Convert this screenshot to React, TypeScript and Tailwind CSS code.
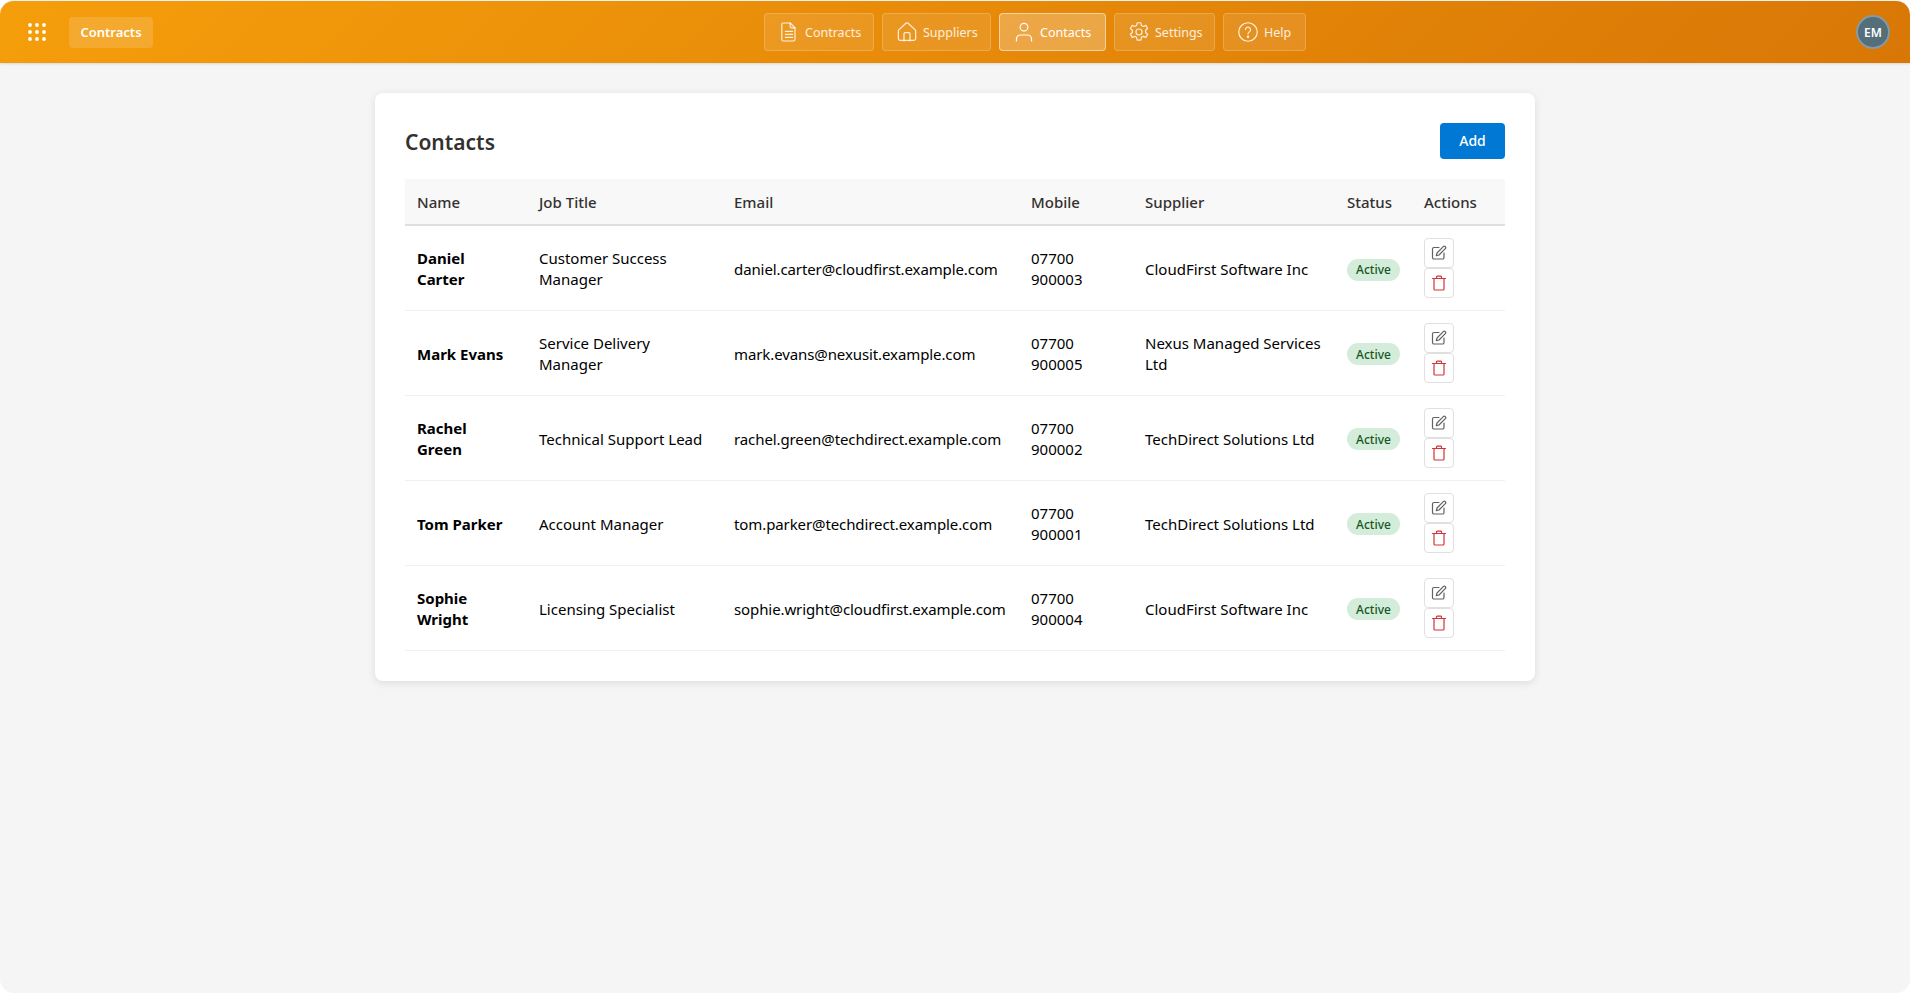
import React from "react";

const rows = [
  ["Daniel Carter", "Customer Success Manager", "daniel.carter@cloudfirst.example.com", "07700 900003", "CloudFirst Software Inc"],
  ["Mark Evans", "Service Delivery Manager", "mark.evans@nexusit.example.com", "07700 900005", "Nexus Managed Services Ltd"],
  ["Rachel Green", "Technical Support Lead", "rachel.green@techdirect.example.com", "07700 900002", "TechDirect Solutions Ltd"],
  ["Tom Parker", "Account Manager", "tom.parker@techdirect.example.com", "07700 900001", "TechDirect Solutions Ltd"],
  ["Sophie Wright", "Licensing Specialist", "sophie.wright@cloudfirst.example.com", "07700 900004", "CloudFirst Software Inc"],
];

const Ico = ({ children }: { children: React.ReactNode }) => (
  <svg width={24} height={24} viewBox="0 0 20 20" fill="none" stroke="currentColor" strokeWidth="1" strokeLinecap="round" strokeLinejoin="round">
    {children}
  </svg>
);

const nav: [string, React.ReactNode, boolean, string][] = [
  ["Contracts", <Ico><path d="M5.500 2.500h5.500l4 4v9.500a1.500 1.500 0 0 1-1.500 1.500h-8a1.500 1.500 0 0 1-1.500-1.500v-12a1.500 1.500 0 0 1 1.500-1.500z" /><path d="M11 2.500v3a1 1 0 0 0 1 1h3" /><path d="M7 9.500h6M7 12h6M7 14.500h6" /></Ico>, false, "w-[110px]"],
  ["Suppliers", <Ico><path d="M8.600 3.100a2 2 0 0 1 2.800 0l5.400 5.100a1 1 0 0 1 .4.800v6.500a1.500 1.500 0 0 1-1.500 1.500h-11.400a1.500 1.500 0 0 1-1.500-1.500v-6.500a1 1 0 0 1 .4-.8z" /><path d="M7.500 17.500v-6a1 1 0 0 1 1-1h3a1 1 0 0 1 1 1v6" /></Ico>, false, "w-[109px]"],
  ["Contacts", <Ico><circle cx="10" cy="6" r="3.200" /><path d="M3.700 17.500v-1.500a3.500 3.500 0 0 1 3.500-3.500h5.600a3.500 3.500 0 0 1 3.500 3.500v1.500" /></Ico>, true, "w-[107px]"],
  ["Settings", <Ico><circle cx="10" cy="10" r="2.500" /><path d="M8.500 2.300h3l.5 2.300 1.500.8 2.200-.9 1.500 2.600-1.700 1.500v1.800l1.700 1.500-1.500 2.600-2.200-.9-1.500.8-.5 2.300h-3l-.5-2.300-1.500-.8-2.200.9-1.500-2.600 1.700-1.500v-1.800l-1.700-1.500 1.500-2.600 2.200.9 1.500-.8z" /></Ico>, false, "w-[101px]"],
  ["Help", <Ico><circle cx="10" cy="10" r="7.700" /><path d="M7.900 8a2.100 2.100 0 1 1 3.300 1.800c-.8.5-1.200 1-1.200 1.800" /><circle cx="10" cy="14" r=".5" fill="currentColor" /></Ico>, false, "w-[83px]"],
];

export default function App() {
  return (
    <div className="bg-white font-['Noto_Sans','Open_Sans',sans-serif] text-[#000]">
      <div className="h-[993px] overflow-hidden rounded-[14px] bg-[#f5f5f5]">
        <div className="h-px bg-[#f5f5f5]" />
        <header className="flex h-[62px] items-center justify-between rounded-t-[14px] bg-[linear-gradient(135deg,#f59e0b,#d97706)] px-5 shadow-sm">
          <div className="flex w-[194px] items-center gap-[15px]">
            <button className="flex h-[34px] w-[34px] items-center justify-center">
              <svg width="18" height="18" viewBox="0 0 18 18" fill="#fff">
                {[2, 9, 16].flatMap((y) => [2, 9, 16].map((x) => <circle key={`${x}${y}`} cx={x} cy={y} r="1.900" />))}
              </svg>
            </button>
            <div className="flex h-[31px] w-[84px] items-center justify-center rounded-[4px] bg-white/15 pt-px text-[13px] font-semibold text-white">Contracts</div>
          </div>
          <nav className="flex gap-2">
            {nav.map(([label, icon, active, width]) => (
              <button
                key={label}
                className={`flex h-[38px] items-center gap-1 rounded-[4px] border pl-3 text-[12.5px] ${width} ${active ? "border-white/50 bg-white/25 text-white" : "border-white/20 bg-white/10 text-white/85"}`}
              >
                {icon}
                <span className="pt-[3px]">{label}</span>
              </button>
            ))}
          </nav>
          <div className="flex h-[34px] w-[34px] items-center justify-center rounded-full border-2 border-white/30 bg-[#546e7a] pt-px text-[12px] font-semibold text-white">EM</div>
        </header>

        <main className="mx-auto mt-[30px] w-[1160px] rounded-lg bg-white p-[30px] shadow-[0_2px_8px_rgba(0,0,0,0.1)]">
          <div className="mb-5 flex h-[36px] items-center justify-between">
            <h1 className="pt-[3px] text-[21px] font-semibold text-[#323130]">Contacts</h1>
            <button className="h-[36px] w-[65px] rounded-[4px] bg-[#0078d4] pb-px text-[14px] font-medium text-white">Add</button>
          </div>
          <table className="w-[1100px] table-fixed border-collapse text-[15px] leading-[21px]">
            <colgroup>
              <col className="w-[122px]" />
              <col className="w-[195px]" />
              <col className="w-[297px]" />
              <col className="w-[114px]" />
              <col className="w-[202px]" />
              <col className="w-[77px]" />
              <col className="w-[93px]" />
            </colgroup>
            <thead>
              <tr className="h-[46px] border-b-2 border-[#e0e0e0] bg-[#f8f8f8] text-left text-[#323130]">
                {["Name", "Job Title", "Email", "Mobile", "Supplier", "Status", "Actions"].map((h) => (
                  <th key={h} className="px-3 pt-[2px] font-medium">{h}</th>
                ))}
              </tr>
            </thead>
            <tbody>
              {rows.map((r) => (
                <tr key={r[0]} className="h-[85px] border-b border-[#f0f0f0]">
                  <td className="px-3 pt-[3px] font-bold">{r[0]}</td>
                  <td className="px-3 pt-[3px]">{r[1]}</td>
                  <td className="whitespace-nowrap px-3 pt-[3px] tracking-[-0.1px]">{r[2]}</td>
                  <td className="px-3 pt-[3px]">{r[3]}</td>
                  <td className="px-3 pt-[3px]">{r[4]}</td>
                  <td className="px-3 pt-[3px]">
                    <span className="inline-flex h-[22px] w-[53px] items-center justify-center rounded-full bg-[#d4edda] text-[12px] font-medium text-[#155724]">Active</span>
                  </td>
                  <td className="px-3">
                    <div className="flex flex-col">
                      <button className="flex h-[30px] w-[30px] items-center justify-center rounded-[4px] border border-[#e0e0e0] text-[#616161]">
                        <svg width="16" height="16" viewBox="0 0 16 16" fill="none" stroke="currentColor" strokeWidth="1.200" strokeLinecap="round" strokeLinejoin="round">
                          <path d="M8 2.500H3a1.500 1.500 0 0 0-1.500 1.500v8.500A1.500 1.500 0 0 0 3 14h8.500a1.500 1.500 0 0 0 1.500-1.500V8" />
                          <path d="M12.300 1.700a1.400 1.400 0 0 1 2 2L8 10l-2.700.7.700-2.700z" />
                        </svg>
                      </button>
                      <button className="flex h-[30px] w-[30px] items-center justify-center rounded-[4px] border border-[#e0e0e0] text-[#d13438]">
                        <svg width="16" height="16" viewBox="0 0 16 16" fill="none" stroke="currentColor" strokeWidth="1.200" strokeLinecap="round" strokeLinejoin="round">
                          <path d="M1.500 3.500h13" />
                          <path d="M5.500 3.500V2a.8.8 0 0 1 .8-.8h3.400a.8.8 0 0 1 .8.800v1.500" />
                          <path d="M3 3.500v10.500a1 1 0 0 0 1 1h8a1 1 0 0 0 1-1V3.500" />
                        </svg>
                      </button>
                    </div>
                  </td>
                </tr>
              ))}
            </tbody>
          </table>
        </main>
      </div>
    </div>
  );
}
